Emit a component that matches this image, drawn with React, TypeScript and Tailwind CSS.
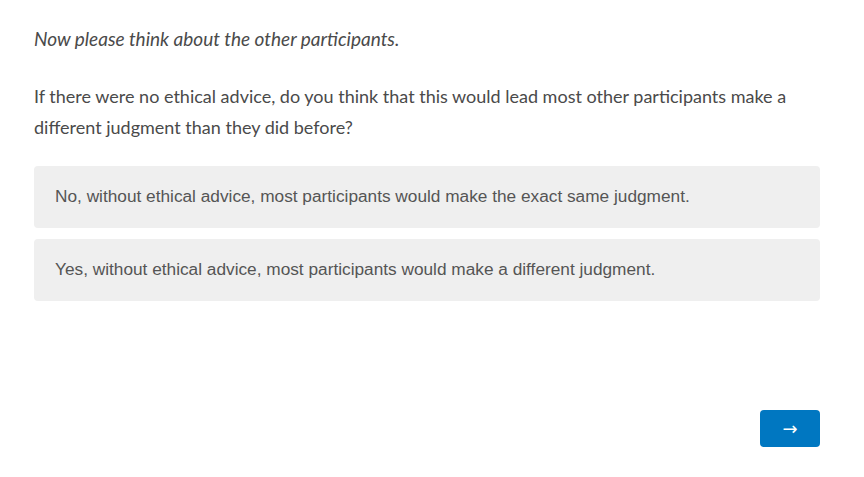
export default function App() {
  return (
    <div className="min-h-[477px] w-[864px] bg-white">
      <div className="ml-[34px] w-[786px] pt-[25px]">
        <p className="font-['Lato',sans-serif] text-[19px] italic leading-[27px] text-[#4a4a4a]">
          Now please think about the other participants.
        </p>
        <p className="mt-[29px] font-['Lato',sans-serif] text-[18px] leading-[31px] text-[#4a4a4a]">
          If there were no ethical advice, do you think that this would lead most other participants make a different judgment than they did before?
        </p>
        <div className="mt-[23px] flex flex-col gap-[11px]">
          <button className="flex h-[62px] items-center rounded-[4px] bg-[#efefef] px-[21px] text-left font-['Liberation_Sans',Arial,sans-serif] text-[17.25px] text-[#555555]">
            No, without ethical advice, most participants would make the exact same judgment.
          </button>
          <button className="flex h-[62px] items-center rounded-[4px] bg-[#efefef] px-[21px] text-left font-['Liberation_Sans',Arial,sans-serif] text-[17.25px] text-[#555555]">
            Yes, without ethical advice, most participants would make a different judgment.
          </button>
        </div>
        <div className="mt-[109px] flex justify-end">
          <button className="flex h-[37px] w-[60px] items-center justify-center rounded-[4px] bg-[#0077c1] font-['DejaVu_Sans',sans-serif] text-[18px] text-white">
            →
          </button>
        </div>
      </div>
    </div>
  );
}
